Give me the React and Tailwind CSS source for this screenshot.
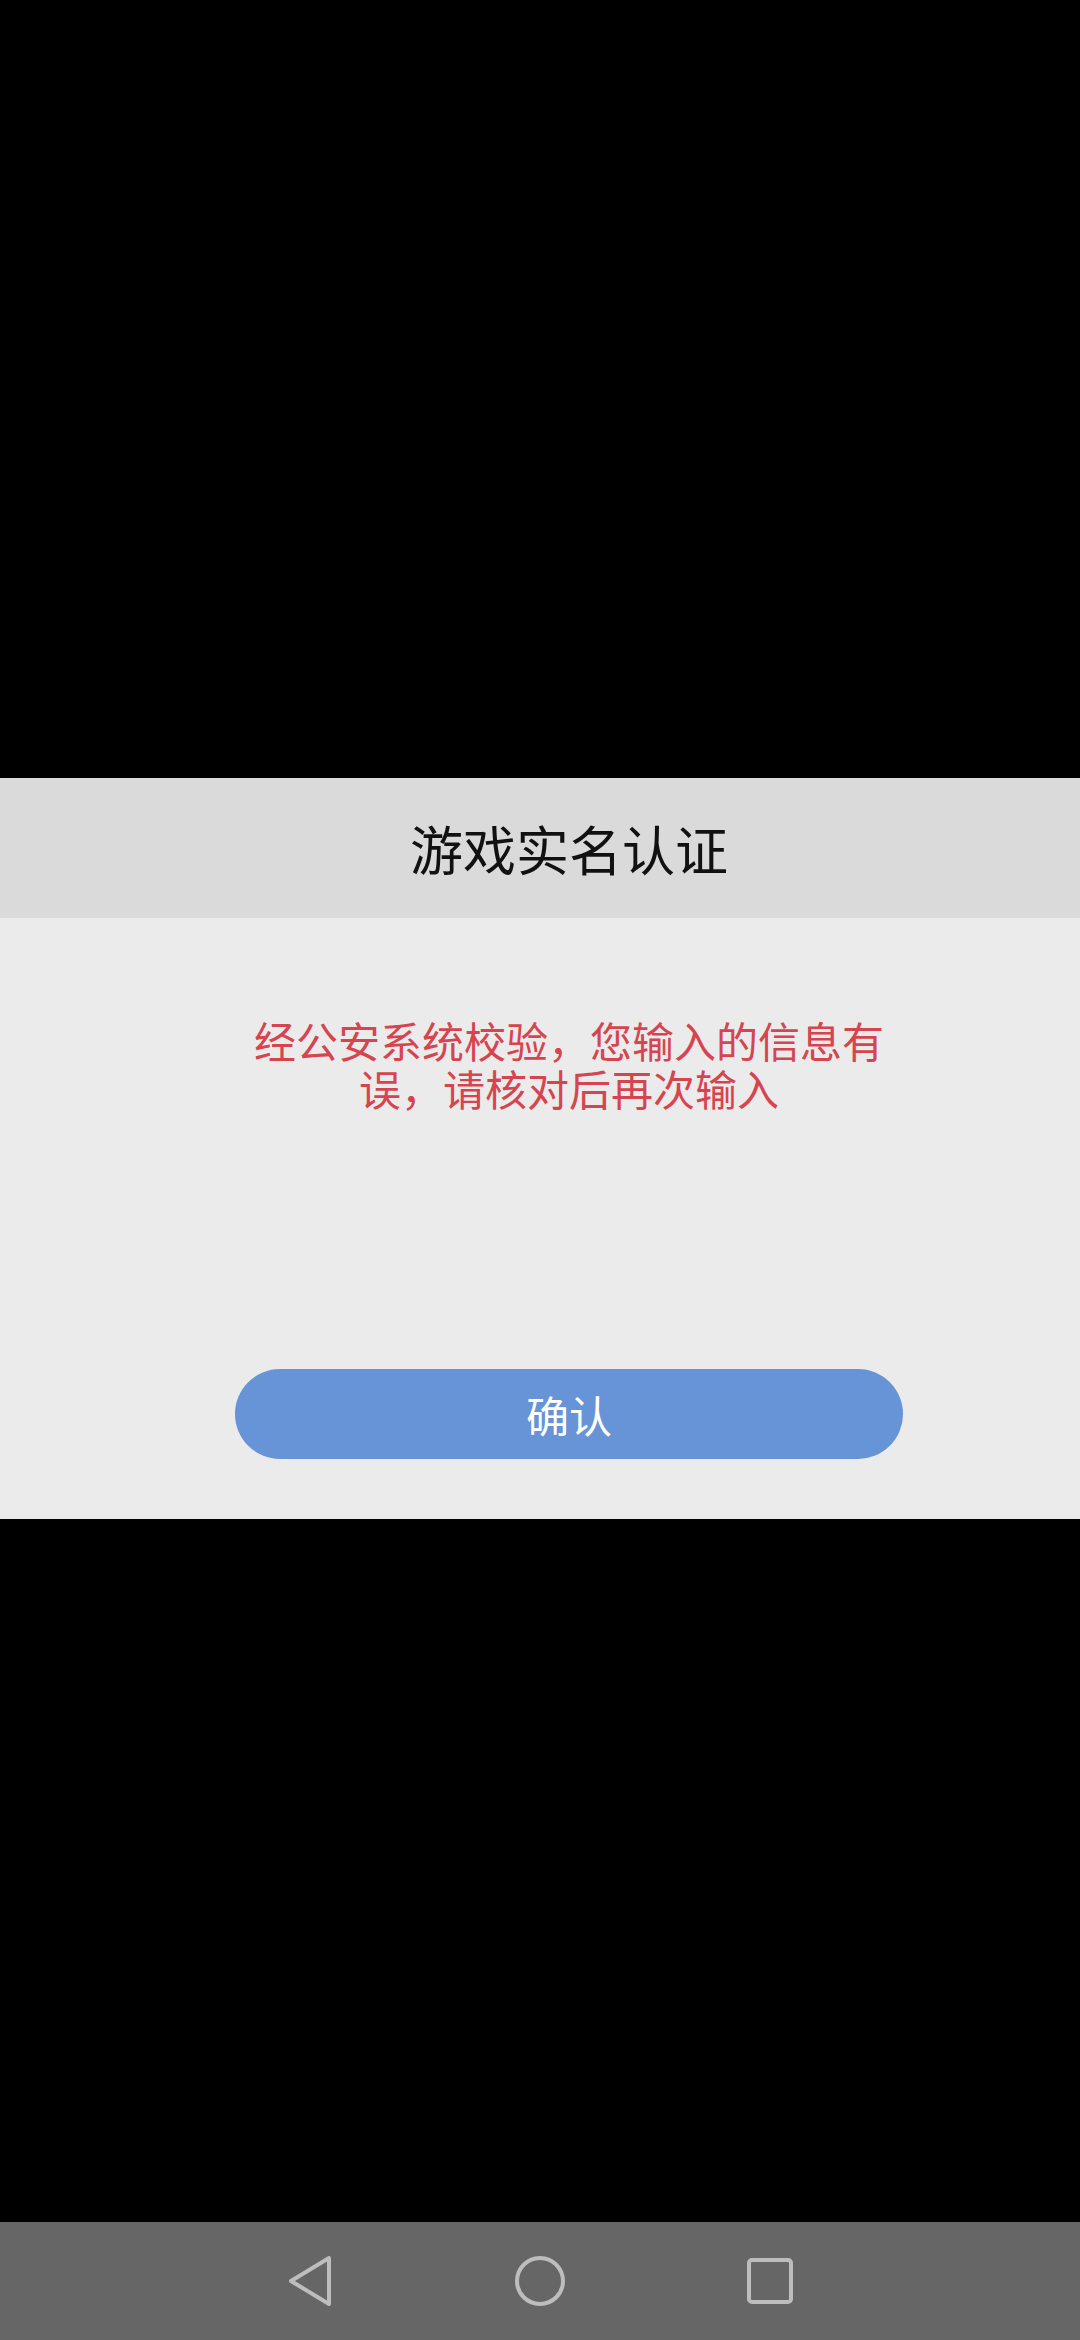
export default function App() {
  const font = { fontFamily: '"Noto Sans CJK SC", "Noto Sans", sans-serif' };
  return (
    <div className="w-[1080px] h-[2340px] bg-black flex flex-col" style={font}>
      <div className="h-[778px] shrink-0" />
      <div className="shrink-0 flex flex-col">
        <div className="h-[140px] bg-[#dadada] flex items-center justify-center pl-[58px]">
          <span className="text-[53px] leading-none text-[#111111]">游戏实名认证</span>
        </div>
        <div className="h-[601px] bg-[#ebebeb] flex flex-col items-center pl-[58px] pt-[98px]">
          <p className="w-[650px] text-center text-[42px] leading-[48px] text-[#d6454f]">
            经公安系统校验，您输入的信息有误，请核对后再次输入
          </p>
          <button className="mt-[257px] w-[668px] h-[90px] rounded-full bg-[#6694d6] text-white text-[43px] leading-none flex items-center justify-center">
            确认
          </button>
        </div>
      </div>
      <div className="flex-1" />
      <div className="h-[118px] shrink-0 bg-[#666666] flex items-center justify-center gap-[170px]">
        <svg width="60" height="60" viewBox="0 0 60 60" fill="none" stroke="#bdbdbd" strokeWidth="4" strokeLinejoin="round">
          <path d="M49 7 L11 30 L49 53 Z" />
        </svg>
        <svg width="60" height="60" viewBox="0 0 60 60" fill="none" stroke="#bdbdbd" strokeWidth="4">
          <circle cx="30" cy="30" r="23" />
        </svg>
        <svg width="60" height="60" viewBox="0 0 60 60" fill="none" stroke="#bdbdbd" strokeWidth="4">
          <rect x="9" y="9" width="42" height="42" rx="3" />
        </svg>
      </div>
    </div>
  );
}
